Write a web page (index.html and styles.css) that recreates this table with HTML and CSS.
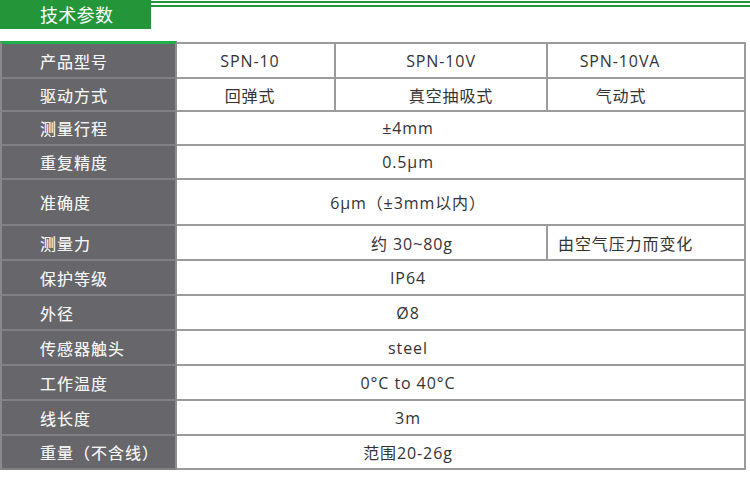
FILE: index.html
```html
<!DOCTYPE html>
<html lang="zh-CN">
<head>
<meta charset="utf-8">
<title>技术参数</title>
<link rel="stylesheet" href="styles.css">
</head>
<body>
<div class="page">
  <div class="head">
    <div class="head-title">技术参数</div>
    <div class="head-lines"><span class="line-a"></span><span class="line-b"></span></div>
  </div>
  <div class="spec">
    <div class="lbl r1 first">产品型号</div>
    <div class="val r1 c1">SPN-10</div>
    <div class="val r1 c2">SPN-10V</div>
    <div class="val r1 c3 last">SPN-10VA</div>

    <div class="lbl">驱动方式</div>
    <div class="val c1">回弹式</div>
    <div class="val c2 c2b">真空抽吸式</div>
    <div class="val c3 c3b last">气动式</div>

    <div class="lbl">测量行程</div>
    <div class="val span3 last">±4mm</div>

    <div class="lbl">重复精度</div>
    <div class="val span3 last">0.5μm</div>

    <div class="lbl tall">准确度</div>
    <div class="val span3 last tall">6μm（±3mm以内）</div>

    <div class="lbl">测量力</div>
    <div class="val span2">约 30~80g</div>
    <div class="val c3 left last">由空气压力而变化</div>

    <div class="lbl">保护等级</div>
    <div class="val span3 last">IP64</div>

    <div class="lbl">外径</div>
    <div class="val span3 last">Ø8</div>

    <div class="lbl">传感器触头</div>
    <div class="val span3 last">steel</div>

    <div class="lbl">工作温度</div>
    <div class="val span3 last">0°C to 40°C</div>

    <div class="lbl">线长度</div>
    <div class="val span3 last">3m</div>

    <div class="lbl">重量（不含线）</div>
    <div class="val span3 last">范围20-26g</div>
  </div>
</div>
</body>
</html>
```

FILE: styles.css
```css
html, body {
  margin: 0;
  padding: 0;
  background: #ffffff;
}
body {
  font-family: "Open Sans", "Noto Sans CJK SC", sans-serif;
}
.page {
  width: 750px;
}
.head {
  display: flex;
  height: 29px;
}
.head-title {
  width: 151px;
  background: #229639;
  color: #ffffff;
  font-family: "Noto Sans CJK SC", sans-serif;
  font-size: 18px;
  line-height: 29px;
  padding-left: 40px;
  box-sizing: border-box;
  letter-spacing: 0.3px;
}
.head-lines {
  flex: 1;
  display: flex;
  flex-direction: column;
  padding-top: 1px;
  gap: 2px;
}
.line-a {
  display: block;
  height: 2px;
  background: #229639;
}
.line-b {
  display: block;
  height: 2px;
  background: #229639;
}
.spec {
  margin-top: 12px;
  display: grid;
  grid-template-columns: 177px 159px 212px 198px;
  grid-template-rows: 38px 33px 34px 34px 46px 35px 35px 35px 35px 35px 35px 34px;
}
.lbl {
  background: #67676b;
  color: #f4f4f4;
  font-family: "Noto Sans CJK SC", sans-serif;
  font-size: 16px;
  letter-spacing: 1px;
  border-left: 2px solid #8a8a8d;
  border-right: 2px solid #8e8e90;
  border-bottom: 2px solid #818185;
  padding-left: 38px;
  display: flex;
  align-items: center;
  box-sizing: border-box;
  text-shadow: 0 0 0.6px rgba(255,255,255,0.6);
}
.lbl.first {
  border-top: 3px solid #20ae4b;
}
.val {
  color: #333333;
  font-size: 16px;
  letter-spacing: 0.9px;
  border-right: 2px solid #9b9b9b;
  border-bottom: 2px solid #9b9b9b;
  display: flex;
  align-items: center;
  justify-content: center;
  box-sizing: border-box;
}
.val.r1 {
  border-top: 2px solid #9b9b9b;
  margin-top: 1px;
}
.val.c1 {
  padding-right: 11px;
}
.val.c2b {
  padding-left: 20px;
}
.val.c3 {
  padding-right: 52px;
}
.val.c3b {
  padding-right: 50px;
}
.val.left {
  justify-content: flex-start;
  padding-left: 10px;
  padding-right: 0;
}
.val.span3 {
  grid-column: span 3;
  padding-right: 105px;
}
.val.span2 {
  grid-column: span 2;
  padding-left: 101px;
}
```
